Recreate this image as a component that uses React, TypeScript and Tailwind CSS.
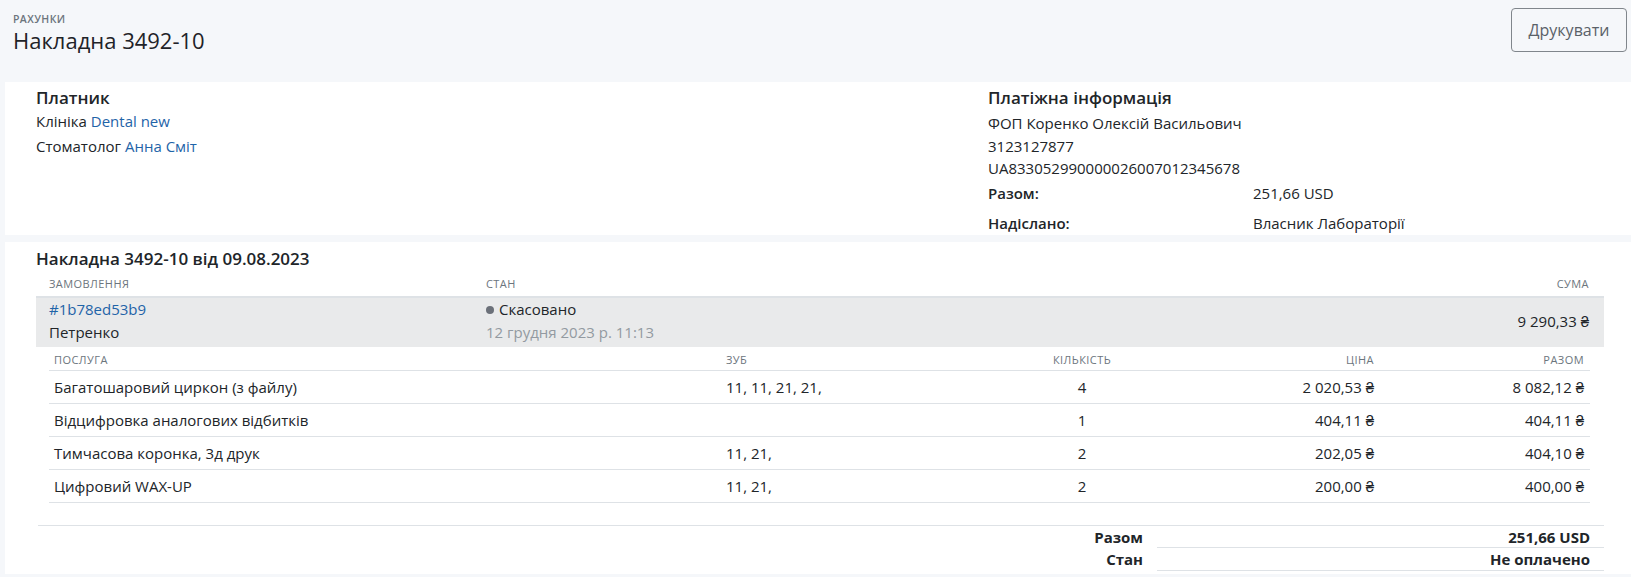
import React from 'react';

const services = [
  { name: 'Багатошаровий циркон (з файлу)', teeth: '11, 11, 21, 21,', qty: '4', price: '2 020,53 ₴', total: '8 082,12 ₴' },
  { name: 'Відцифровка аналогових відбитків', teeth: '', qty: '1', price: '404,11 ₴', total: '404,11 ₴' },
  { name: 'Тимчасова коронка, 3д друк', teeth: '11, 21,', qty: '2', price: '202,05 ₴', total: '404,10 ₴' },
  { name: 'Цифровий WAX-UP', teeth: '11, 21,', qty: '2', price: '200,00 ₴', total: '400,00 ₴' },
];

const svcGrid = 'grid grid-cols-[672px_240px_242px_176px_210px]';

export default function App() {
  return (
    <div className="min-h-screen bg-[#f5f7fa] text-[#212529] font-['Open_Sans',sans-serif] text-[15px]">
      {/* page header */}
      <header className="h-[82px] flex justify-between items-start pl-[13px] pr-[4px] pt-[8px]">
        <div className="pt-[4px]">
          <div className="text-[10.5px] leading-[14px] font-semibold uppercase tracking-[0.04em] text-[#6c757d]">Рахунки</div>
          <h1 className="text-[22px] leading-[28px] font-medium text-[#1f2328]">Накладна 3492-10</h1>
        </div>
        <button className="w-[116px] h-[44px] border border-[#80868c] rounded-[4px] text-[16px] font-medium text-[#5a6168]">
          Друкувати
        </button>
      </header>

      {/* payer / payment info */}
      <section className="ml-[5px] h-[153px] bg-white pl-[31px] pr-[27px] pt-[5px] flex">
        <div className="w-[952px]">
          <h2 className="text-[17px] leading-[22px] font-semibold">Платник</h2>
          <div className="leading-[24.5px]">
            Клініка <span className="text-[#1f64a8]">Dental new</span>
          </div>
          <div className="leading-[24.5px]">
            Стоматолог <span className="text-[#1f64a8]">Анна Сміт</span>
          </div>
        </div>
        <div className="flex-1">
          <h2 className="text-[17px] leading-[22px] font-semibold">Платіжна інформація</h2>
          <div className="mt-[3px] leading-[22.5px]">
            <div>ФОП Коренко Олексій Васильович</div>
            <div>3123127877</div>
            <div>UA833052990000026007012345678</div>
          </div>
          <div className="grid grid-cols-[265px_1fr] leading-[26px]">
            <div className="font-semibold">Разом:</div>
            <div>251,66 USD</div>
            <div className="font-semibold pt-[4px]">Надіслано:</div>
            <div className="pt-[4px]">Власник Лабораторії</div>
          </div>
        </div>
      </section>

      {/* invoice details */}
      <section className="ml-[5px] mt-[7px] h-[332px] bg-white pl-[31px] pr-[27px] pt-[6px]">
        <h2 className="text-[17px] leading-[22px] font-semibold">Накладна 3492-10 від 09.08.2023</h2>

        <div className="mt-[2px] grid grid-cols-[437px_1fr_300px] h-[26px] items-center border-b-2 border-[#dee2e6] pl-[13px] pr-[15px] text-[11px] uppercase tracking-[0.04em] text-[#6c757d]">
          <div>Замовлення</div>
          <div>Стан</div>
          <div className="text-right">Сума</div>
        </div>
        <div className="grid grid-cols-[437px_1fr_300px] bg-[#e9eaeb] pl-[13px] pr-[15px] pb-[3px] leading-[23px]">
          <div>
            <div className="text-[#1f64a8]">#1b78ed53b9</div>
            <div>Петренко</div>
          </div>
          <div>
            <div className="flex items-center gap-[5px]">
              <span className="w-[8px] h-[8px] rounded-full bg-[#6b7079]"></span>
              Скасовано
            </div>
            <div className="text-[#939aa1]">12 грудня 2023 р. 11:13</div>
          </div>
          <div className="flex items-center justify-end">9 290,33 ₴</div>
        </div>

        <div className="ml-[13px] mr-[14px]">
          <div className={`${svcGrid} h-[24px] items-end pb-[3px] border-b border-[#dee2e6] text-[11px] leading-[14px] uppercase tracking-[0.04em] text-[#6c757d]`}>
            <div className="px-[5px]">Послуга</div>
            <div className="px-[5px]">Зуб</div>
            <div className="px-[5px] text-center">Кількість</div>
            <div className="px-[5px] text-right">Ціна</div>
            <div className="px-[5px] text-right">Разом</div>
          </div>
          {services.map((s) => (
            <div key={s.name} className={`${svcGrid} h-[33px] items-center border-b border-[#dee2e6]`}>
              <div className="px-[5px]">{s.name}</div>
              <div className="px-[5px]">{s.teeth}</div>
              <div className="px-[5px] text-center">{s.qty}</div>
              <div className="px-[5px] text-right">{s.price}</div>
              <div className="px-[5px] text-right">{s.total}</div>
            </div>
          ))}
        </div>

        <div className="mt-[22px] ml-[2px] border-t border-[#dee2e6] grid grid-cols-[1fr_447px] font-bold">
          <div className="text-right pr-[14px] h-[22px] leading-[22px]">Разом</div>
          <div className="text-right pr-[14px] h-[22px] leading-[22px] border-b border-[#dee2e6]">251,66 USD</div>
          <div className="text-right pr-[14px] h-[23px] leading-[23px]">Стан</div>
          <div className="text-right pr-[14px] h-[23px] leading-[23px] border-b border-[#dee2e6]">Не оплачено</div>
        </div>
      </section>
    </div>
  );
}
